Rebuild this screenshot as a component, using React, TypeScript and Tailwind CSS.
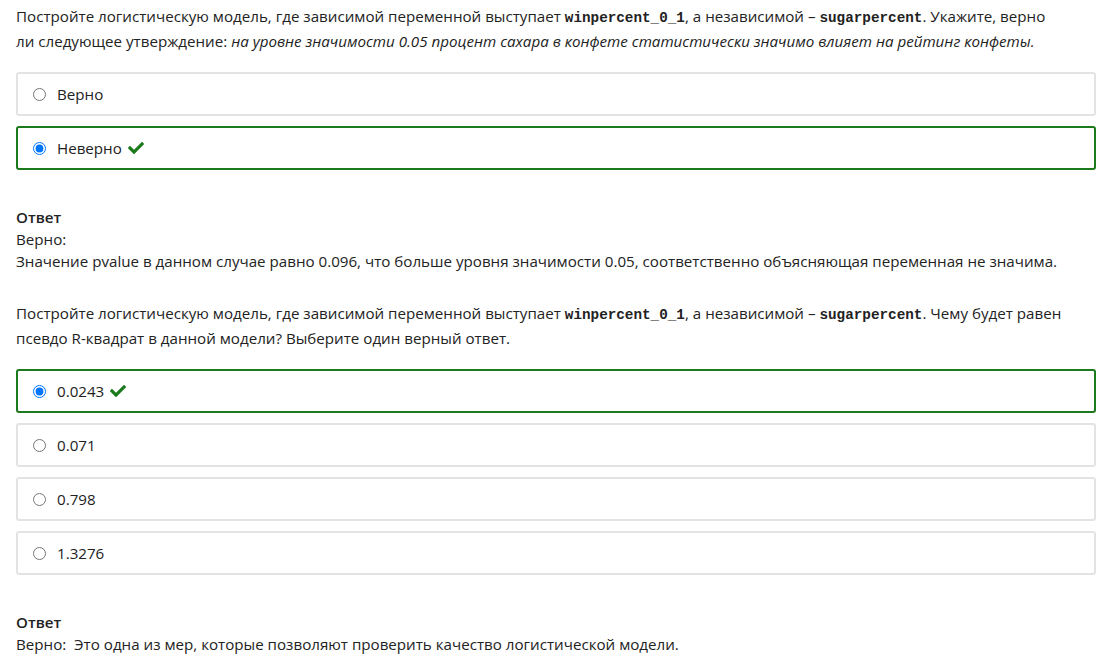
import { FaCheck } from 'react-icons/fa';

type Option = { label: string; checked?: boolean; correct?: boolean };

const mono = "font-['Liberation_Mono',monospace] font-bold text-[14.3px]";

function OptionCard({ opt, name }: { opt: Option; name: string }) {
    return (
        <label
            className={`flex h-[44px] items-center gap-[11px] rounded-[3px] border-2 pl-[15px] ${
                opt.correct ? 'border-[#1c7a1c]' : 'border-[#e3e3e3]'
            }`}
        >
            <input type="radio" name={name} defaultChecked={opt.checked} className="m-0 h-[13px] w-[13px]" />
            <span>{opt.label}</span>
            {opt.correct && <FaCheck className="-ml-[5px] h-[16px] w-[16px] text-[#1c7a1c]" />}
        </label>
    );
}

function Answer({ children }: { children: React.ReactNode }) {
    return (
        <div className="leading-[22px]">
            <div className="font-semibold">Ответ</div>
            {children}
        </div>
    );
}

export default function App() {
    const q1: Option[] = [{ label: 'Верно' }, { label: 'Неверно', checked: true, correct: true }];
    const q2: Option[] = [
        { label: '0.0243', checked: true, correct: true },
        { label: '0.071' },
        { label: '0.798' },
        { label: '1.3276' },
    ];

    return (
        <div className="min-h-[659px] bg-white px-[16px] pt-[5px] font-['Open_Sans',sans-serif] text-[15.15px] text-[#222]">
            <p className="leading-[23px]">
                Постройте логистическую модель, где зависимой переменной выступает{' '}
                <code className={mono}>winpercent_0_1</code>, а независимой – <code className={mono}>sugarpercent</code>.
                Укажите, верно
                <br />
                ли следующее утверждение:{' '}
                <i>на уровне значимости 0.05 процент сахара в конфете статистически значимо влияет на рейтинг конфеты.</i>
            </p>

            <div className="mt-[19px] flex flex-col gap-[10px] pr-[4px]">
                {q1.map((o) => (
                    <OptionCard key={o.label} opt={o} name="q1" />
                ))}
            </div>

            <div className="mt-[36px]">
                <Answer>
                    <div>Верно:</div>
                    <div>
                        Значение pvalue в данном случае равно 0.096, что больше уровня значимости 0.05, соответственно
                        объясняющая переменная не значима.
                    </div>
                </Answer>
            </div>

            <p className="mt-[30px] leading-[23px]">
                Постройте логистическую модель, где зависимой переменной выступает{' '}
                <code className={mono}>winpercent_0_1</code>, а независимой – <code className={mono}>sugarpercent</code>.
                Чему будет равен псевдо R-квадрат в данной модели? Выберите один верный ответ.
            </p>

            <div className="mt-[19px] flex flex-col gap-[10px] pr-[4px]">
                {q2.map((o) => (
                    <OptionCard key={o.label} opt={o} name="q2" />
                ))}
            </div>

            <div className="mt-[36px]">
                <Answer>
                    <div>Верно:&nbsp; Это одна из мер, которые позволяют проверить качество логистической модели.</div>
                </Answer>
            </div>
        </div>
    );
}
